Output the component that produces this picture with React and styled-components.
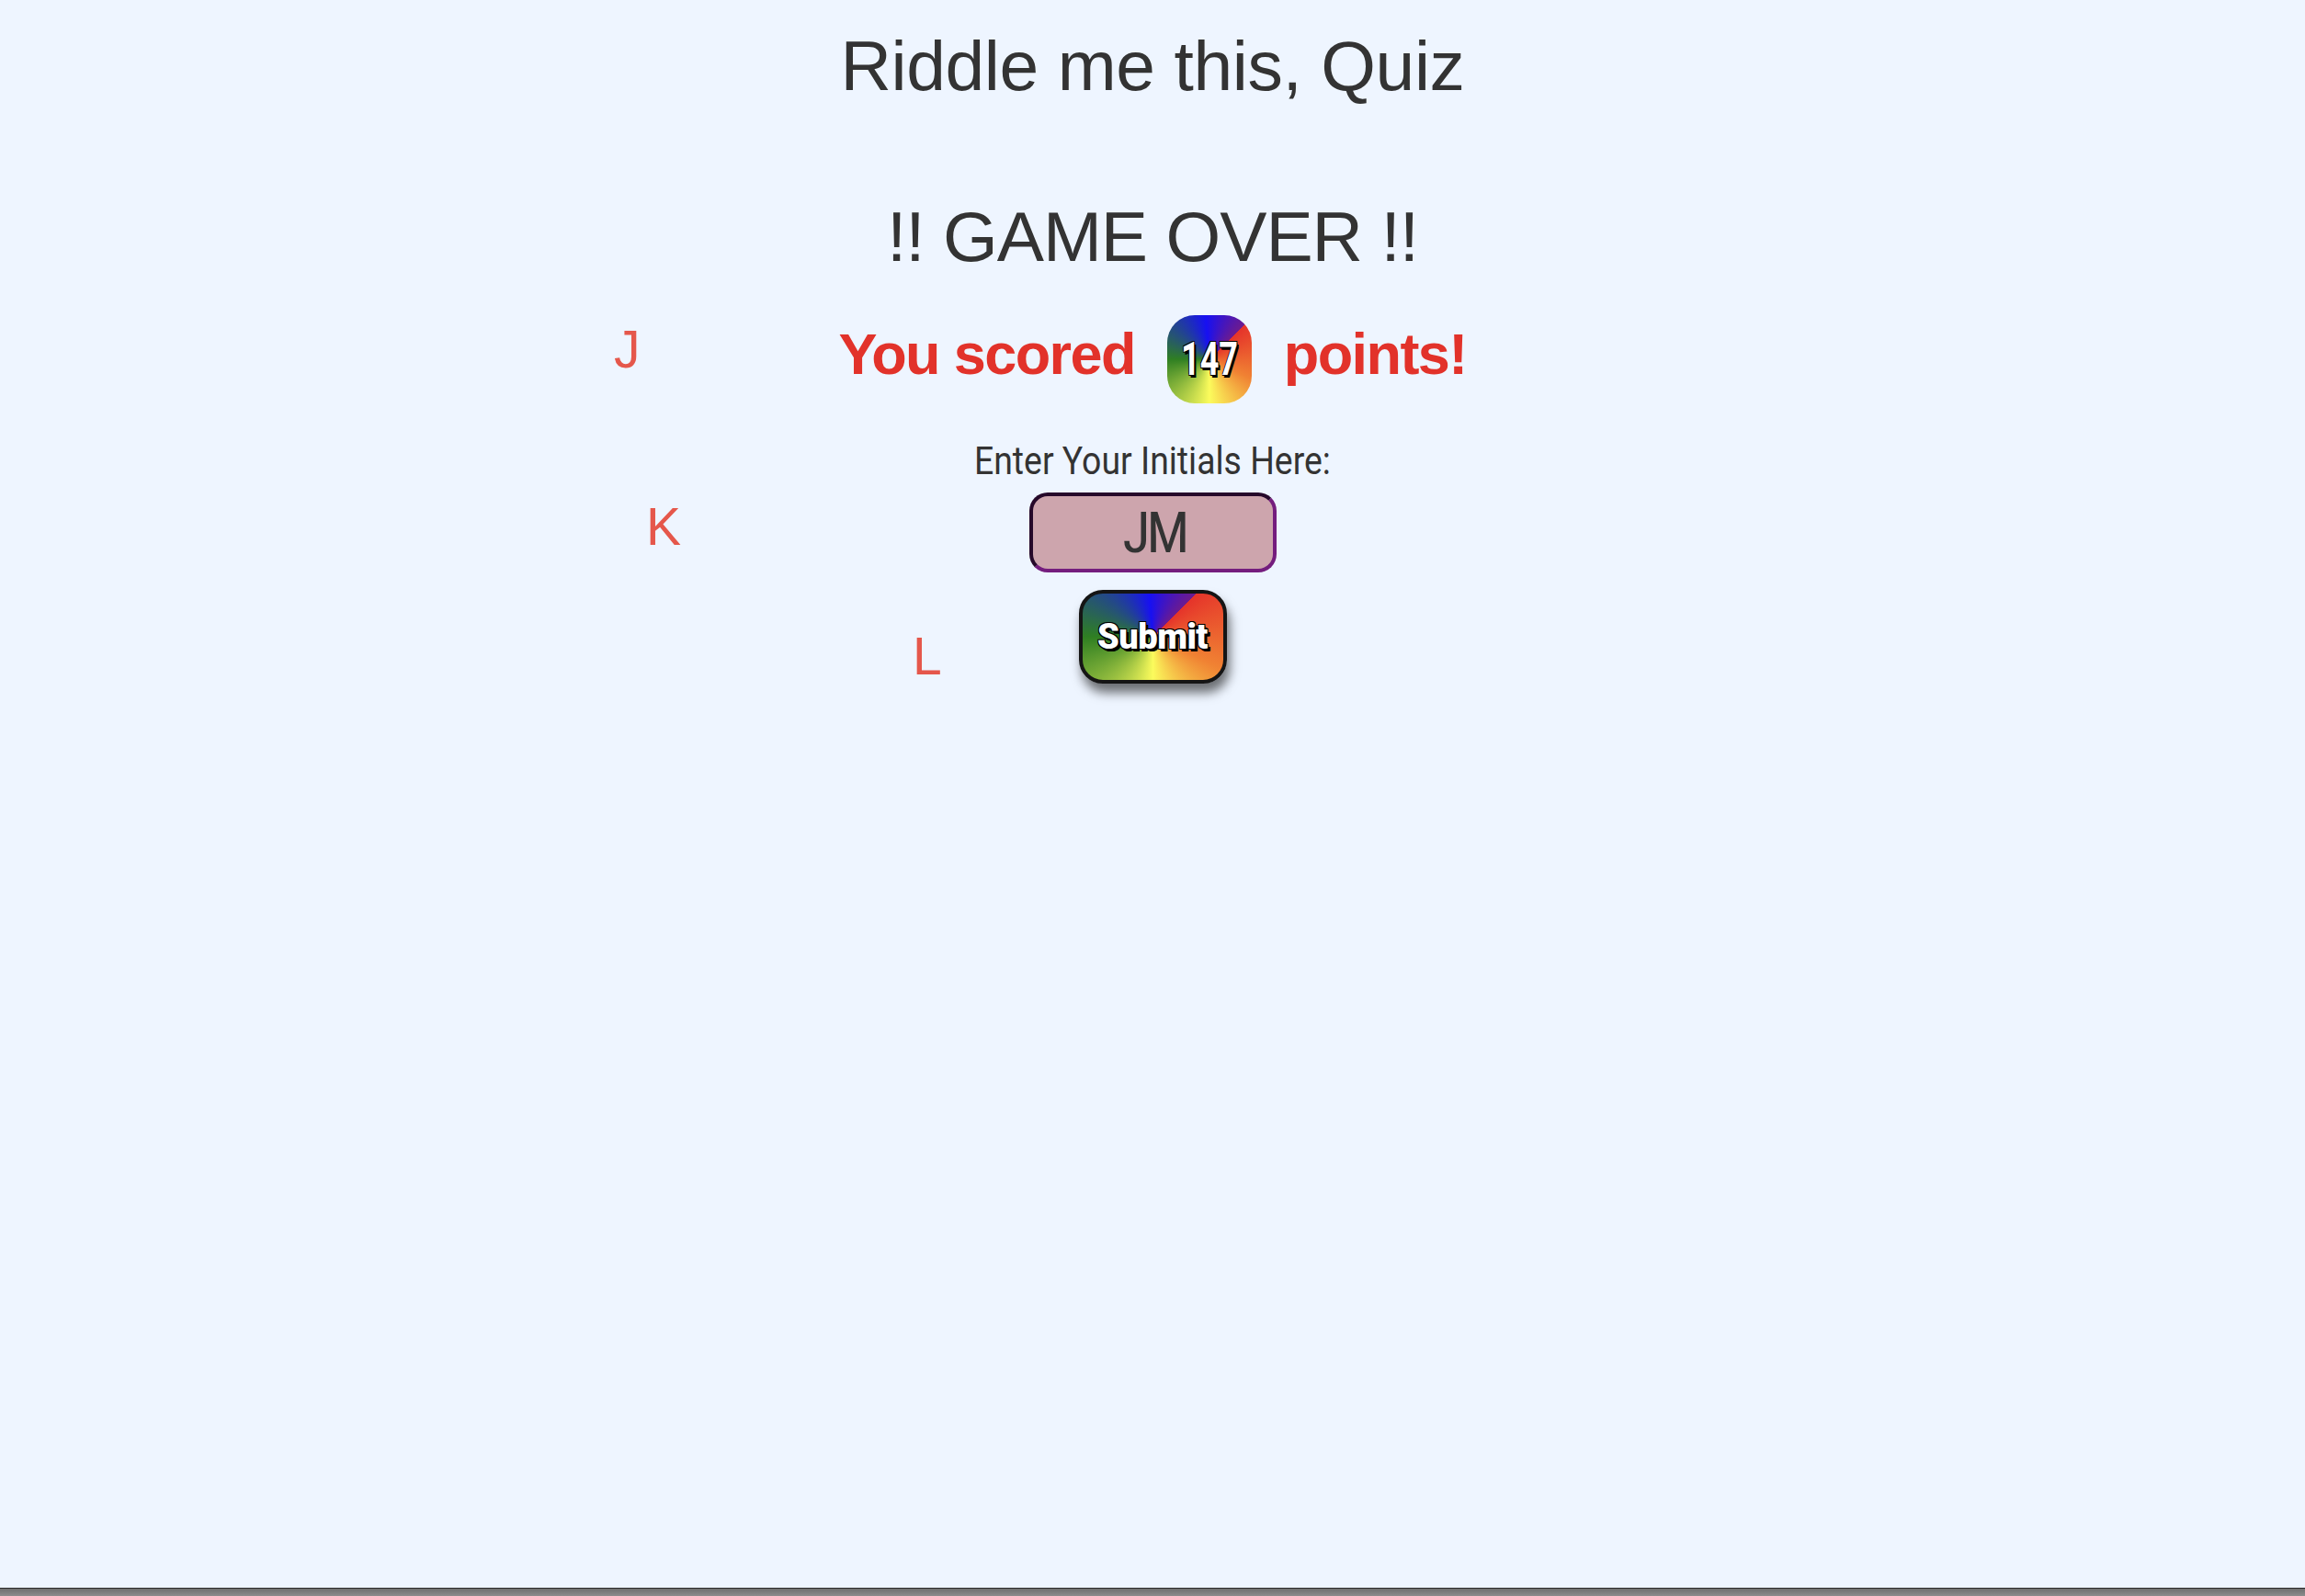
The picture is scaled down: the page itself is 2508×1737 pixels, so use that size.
import React from "react";
import styled, { createGlobalStyle } from "styled-components";

const Global = createGlobalStyle`
  html, body { margin: 0; padding: 0; }
  body {
    background: #eef5ff;
    font-family: "Liberation Sans", Arial, sans-serif;
    color: #333;
  }
`;

const rainbow = `conic-gradient(from 45deg, #e5332a 0deg, #f08233 70deg, #fbfb5c 135deg, #2f7f22 225deg, #1710f2 310deg, #6c1b8f 360deg)`;

const Page = styled.main`
  position: relative;
  min-height: 1728px;
  display: flex;
  flex-direction: column;
  align-items: center;
  overflow: hidden;
`;

const Heading = styled.h1`
  margin: ${(p) => p.$top}px 0 0;
  font-family: "Liberation Sans", Arial, sans-serif;
  font-weight: 400;
  font-size: 76.8px;
  line-height: 86px;
  letter-spacing: ${(p) => p.$spacing}px;
  color: #333;
  text-align: center;
`;

const ScoreRow = styled.h2`
  margin: 43px 0 0;
  display: flex;
  align-items: flex-start;
  gap: 35px;
  font-family: "Liberation Sans", Arial, sans-serif;
  font-weight: 700;
  font-size: 63px;
  line-height: 72px;
  letter-spacing: -1.6px;
  color: #e2322a;
`;

const ScoreText = styled.span`
  padding-top: 6px;
`;

const Badge = styled.span`
  width: 92px;
  height: 96px;
  border-radius: 30px;
  background: ${rainbow};
  display: flex;
  align-items: center;
  justify-content: center;
`;

const outlined = `
  color: #fff;
  text-shadow: -1px -1px 0 #000, 1px -1px 0 #000, -1px 1px 0 #000,
    1px 1px 0 #000, 3px 3px 0 #000, 2px 3px 0 #000;
`;

const BadgeNumber = styled.span`
  display: inline-block;
  font-family: Roboto, "Liberation Sans", sans-serif;
  font-weight: 700;
  font-size: 50px;
  line-height: 1;
  letter-spacing: 0;
  transform: scaleX(0.72);
  ${outlined}
`;

const Form = styled.form`
  margin-top: 38px;
  display: flex;
  flex-direction: column;
  align-items: center;
`;

const Label = styled.label`
  display: inline-block;
  font-family: Roboto, "Liberation Sans", sans-serif;
  font-size: 42px;
  line-height: 50px;
  color: #333;
  transform: scaleX(0.89);
`;

const Input = styled.input`
  box-sizing: border-box;
  margin-top: 9px;
  width: 269px;
  height: 87px;
  border: 4px inset #741d7e;
  border-radius: 20px;
  background: #cda5ad;
  font-family: Roboto, "Liberation Sans", sans-serif;
  font-stretch: 75%;
  font-size: 62px;
  letter-spacing: -4px;
  text-indent: 4px;
  color: #333;
  text-align: center;
  padding: 0;
  outline: none;
`;

const SubmitButton = styled.button`
  box-sizing: border-box;
  margin-top: 19px;
  width: 161px;
  height: 102px;
  border: 4px solid #151515;
  border-radius: 26px;
  background: ${rainbow};
  box-shadow: 3px 10px 12px rgba(0, 0, 0, 0.55);
  font-family: Roboto, "Liberation Sans", sans-serif;
  font-weight: 900;
  font-size: 38px;
  letter-spacing: -0.5px;
  padding: 0;
  cursor: pointer;
  ${outlined}
`;

const FloatingLetter = styled.span`
  position: absolute;
  left: ${(p) => p.$x}px;
  top: ${(p) => p.$y}px;
  font-family: "Liberation Sans", Arial, sans-serif;
  font-size: 57px;
  line-height: 1;
  color: #e5574b;
`;

const BottomEdge = styled.div`
  height: 9px;
  background: linear-gradient(#2a2a2a 0 1px, #6f6f6f 1px, #8c8c8c);
`;

const letters = [
  { ch: "J", x: 668, y: 352 },
  { ch: "K", x: 703, y: 545 },
  { ch: "L", x: 993, y: 686 },
];

export default function App() {
  return (
    <>
      <Global />
      <Page>
        {letters.map((l) => (
          <FloatingLetter key={l.ch} $x={l.x} $y={l.y}>
            {l.ch}
          </FloatingLetter>
        ))}
        <Heading $top={28} $spacing={-0.4}>Riddle me this, Quiz</Heading>
        <Heading $top={100} $spacing={-1}>!! GAME OVER !!</Heading>
        <ScoreRow>
          <ScoreText>You scored</ScoreText>
          <Badge>
            <BadgeNumber>147</BadgeNumber>
          </Badge>
          <ScoreText>points!</ScoreText>
        </ScoreRow>
        <Form onSubmit={(e) => e.preventDefault()}>
          <Label htmlFor="initials">Enter Your Initials Here:</Label>
          <Input id="initials" defaultValue="JM" />
          <SubmitButton type="submit">Submit</SubmitButton>
        </Form>
      </Page>
      <BottomEdge />
    </>
  );
}
